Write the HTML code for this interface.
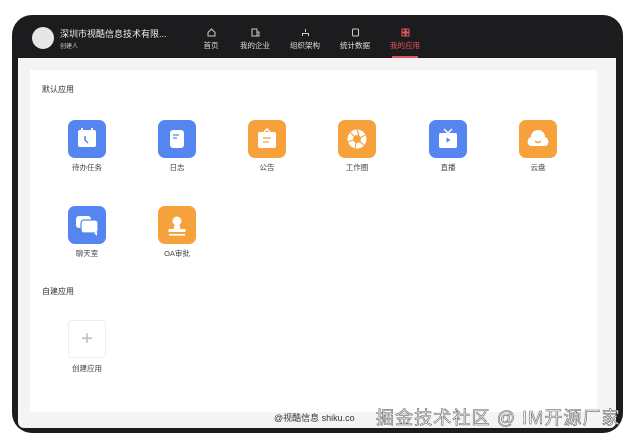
<!DOCTYPE html>
<html><head><meta charset="utf-8"><style>
*{margin:0;padding:0;box-sizing:border-box}
body{width:635px;height:442px;background:#fff;position:relative;overflow:hidden;font-family:"Liberation Sans","Noto Sans CJK SC",sans-serif}
.frame{position:absolute;left:12px;top:15px;width:611px;height:418px;background:#1c1c1e;border-radius:20px}
.screen{position:absolute;left:18px;top:58px;width:598px;height:370px;background:#f4f4f4;border-radius:0 0 6px 6px}
.card{position:absolute;left:30px;top:70px;width:567px;height:342px;background:#fff}
.t{position:absolute;color:#333;font-size:8px;white-space:nowrap}
.nav{position:absolute;top:28px;width:50px;text-align:center;color:#ddd;font-size:7.5px}
.nav svg{display:block;margin:0 auto 3px}
.ic{position:absolute;width:38px;height:38px;border-radius:7px}
.b{background:#5585f0}.o{background:#f7a13d}
.ic svg{position:absolute;left:0;top:0}
.lab{position:absolute;width:80px;text-align:center;font-size:7.5px;color:#444}
</style></head><body>
<div class="frame"></div>
<div class="screen"></div>
<div class="card"></div>
<div style="position:absolute;left:32px;top:27px;width:22px;height:22px;border-radius:50%;background:#e6e6e6"></div>
<div class="t" style="left:60px;top:27px;color:#eee;font-size:9px">深圳市视酷信息技术有限...</div>
<div class="t" style="left:60px;top:41px;color:#ccc;font-size:6px">创建人</div>
<div class="nav" style="left:186px"><svg width="9" height="9" viewBox="0 0 9 9"><path d="M1 4.5L4.5 1 8 4.5V8H1Z" fill="none" stroke="#ccc"/></svg>首页</div>
<div class="nav" style="left:230px"><svg width="9" height="9" viewBox="0 0 9 9"><rect x="1" y="1" width="5" height="7" fill="none" stroke="#ccc"/><rect x="6" y="4" width="2" height="4" fill="none" stroke="#ccc"/></svg>我的企业</div>
<div class="nav" style="left:280px"><svg width="9" height="9" viewBox="0 0 9 9"><path d="M4.5 1V4M1.5 8V5.5H7.5V8" fill="none" stroke="#ccc"/></svg>组织架构</div>
<div class="nav" style="left:330px"><svg width="9" height="9" viewBox="0 0 9 9"><rect x="1.5" y="1" width="6" height="7" rx="1" fill="none" stroke="#ccc"/></svg>统计数据</div>
<div class="nav" style="left:380px;color:#e2555a"><svg width="9" height="9" viewBox="0 0 9 9"><rect x="1" y="1" width="3" height="3" fill="none" stroke="#e2555a"/><rect x="5" y="1" width="3" height="3" fill="none" stroke="#e2555a"/><rect x="1" y="5" width="3" height="3" fill="none" stroke="#e2555a"/><rect x="5" y="5" width="3" height="3" fill="none" stroke="#e2555a"/></svg>我的应用</div>
<div style="position:absolute;left:392px;top:56px;width:26px;height:2px;background:#e2555a"></div>

<div class="t" style="left:42px;top:84px">默认应用</div>

<div class="ic b" style="left:68px;top:120px"><svg width="38" height="38"><rect x="10" y="10" width="18" height="17" rx="2" fill="#fff"/><path d="M14 8v5M24 8v5" stroke="#fff" stroke-width="2"/><path d="M17 16v4l3 3" stroke="#5585f0" stroke-width="1.5" fill="none"/></svg></div>
<div class="lab" style="left:47px;top:162px">待办任务</div>
<div class="ic b" style="left:158px;top:120px"><svg width="38" height="38"><rect x="12" y="10" width="14" height="18" rx="3" fill="#fff"/><path d="M15 15h6M15 18h4" stroke="#5585f0" stroke-width="1.3"/></svg></div>
<div class="lab" style="left:137px;top:162px">日志</div>
<div class="ic o" style="left:248px;top:120px"><svg width="38" height="38"><rect x="10" y="12" width="18" height="16" rx="2" fill="#fff"/><path d="M16 12l3-3 3 3" stroke="#fff" stroke-width="1.5" fill="none"/><path d="M15 18h8M15 22h6" stroke="#f7a13d" stroke-width="1.3"/></svg></div>
<div class="lab" style="left:227px;top:162px">公告</div>
<div class="ic o" style="left:338px;top:120px"><svg width="38" height="38"><circle cx="19" cy="19" r="9.5" fill="#fff"/><circle cx="19" cy="19" r="4" fill="#f7a13d"/><path d="M19 9.5l2 6M27 15l-5 3M26 25l-5-4M17 28l1-5M10 22l5-2M12 12l4 4" stroke="#f7a13d" stroke-width="1.2"/></svg></div>
<div class="lab" style="left:317px;top:162px">工作圈</div>
<div class="ic b" style="left:429px;top:120px"><svg width="38" height="38"><rect x="10" y="13" width="18" height="15" rx="2" fill="#fff"/><path d="M15 9l4 4 4-4" stroke="#fff" stroke-width="1.5" fill="none"/><path d="M17.5 17.5v5l4-2.5z" fill="#5585f0"/></svg></div>
<div class="lab" style="left:408px;top:162px">直播</div>
<div class="ic o" style="left:519px;top:120px"><svg width="38" height="38"><path d="M11 26a5 5 0 0 1 1-9 7 7 0 0 1 14 0 5 5 0 0 1 1 9z" fill="#fff"/><path d="M16 21q3 3 6 0" stroke="#f7a13d" stroke-width="1.3" fill="none"/></svg></div>
<div class="lab" style="left:498px;top:162px">云盘</div>

<div class="ic b" style="left:68px;top:206px"><svg width="38" height="38"><rect x="8" y="10" width="15" height="12" rx="3" fill="#fff"/><rect x="13" y="14" width="17" height="13" rx="3" fill="#fff" stroke="#5585f0" stroke-width="1.2"/><path d="M26 27l3 3v-4" fill="#fff"/></svg></div>
<div class="lab" style="left:47px;top:248px">聊天室</div>
<div class="ic o" style="left:158px;top:206px"><svg width="38" height="38"><circle cx="19" cy="15" r="4.5" fill="#fff"/><path d="M16.5 19h5l1 4h5v3H10.5v-3h5z" fill="#fff"/><rect x="11" y="28" width="16" height="1.6" fill="#fff"/></svg></div>
<div class="lab" style="left:137px;top:248px">OA审批</div>

<div class="t" style="left:42px;top:286px">自建应用</div>
<div style="position:absolute;left:68px;top:320px;width:38px;height:38px;border:1px solid #eee;border-radius:3px;color:#bbb;font-size:20px;text-align:center;line-height:36px;font-weight:200">+</div>
<div class="lab" style="left:47px;top:363px">创建应用</div>

<div class="t" style="left:274px;top:411px;font-size:9px;color:#333">@视酷信息 shiku.co</div>
<div class="t" style="left:376px;top:404px;font-size:18px;color:#fff;-webkit-text-stroke:0.6px #666;letter-spacing:1.1px">掘金技术社区 @ IM开源厂家</div>
</body></html>
